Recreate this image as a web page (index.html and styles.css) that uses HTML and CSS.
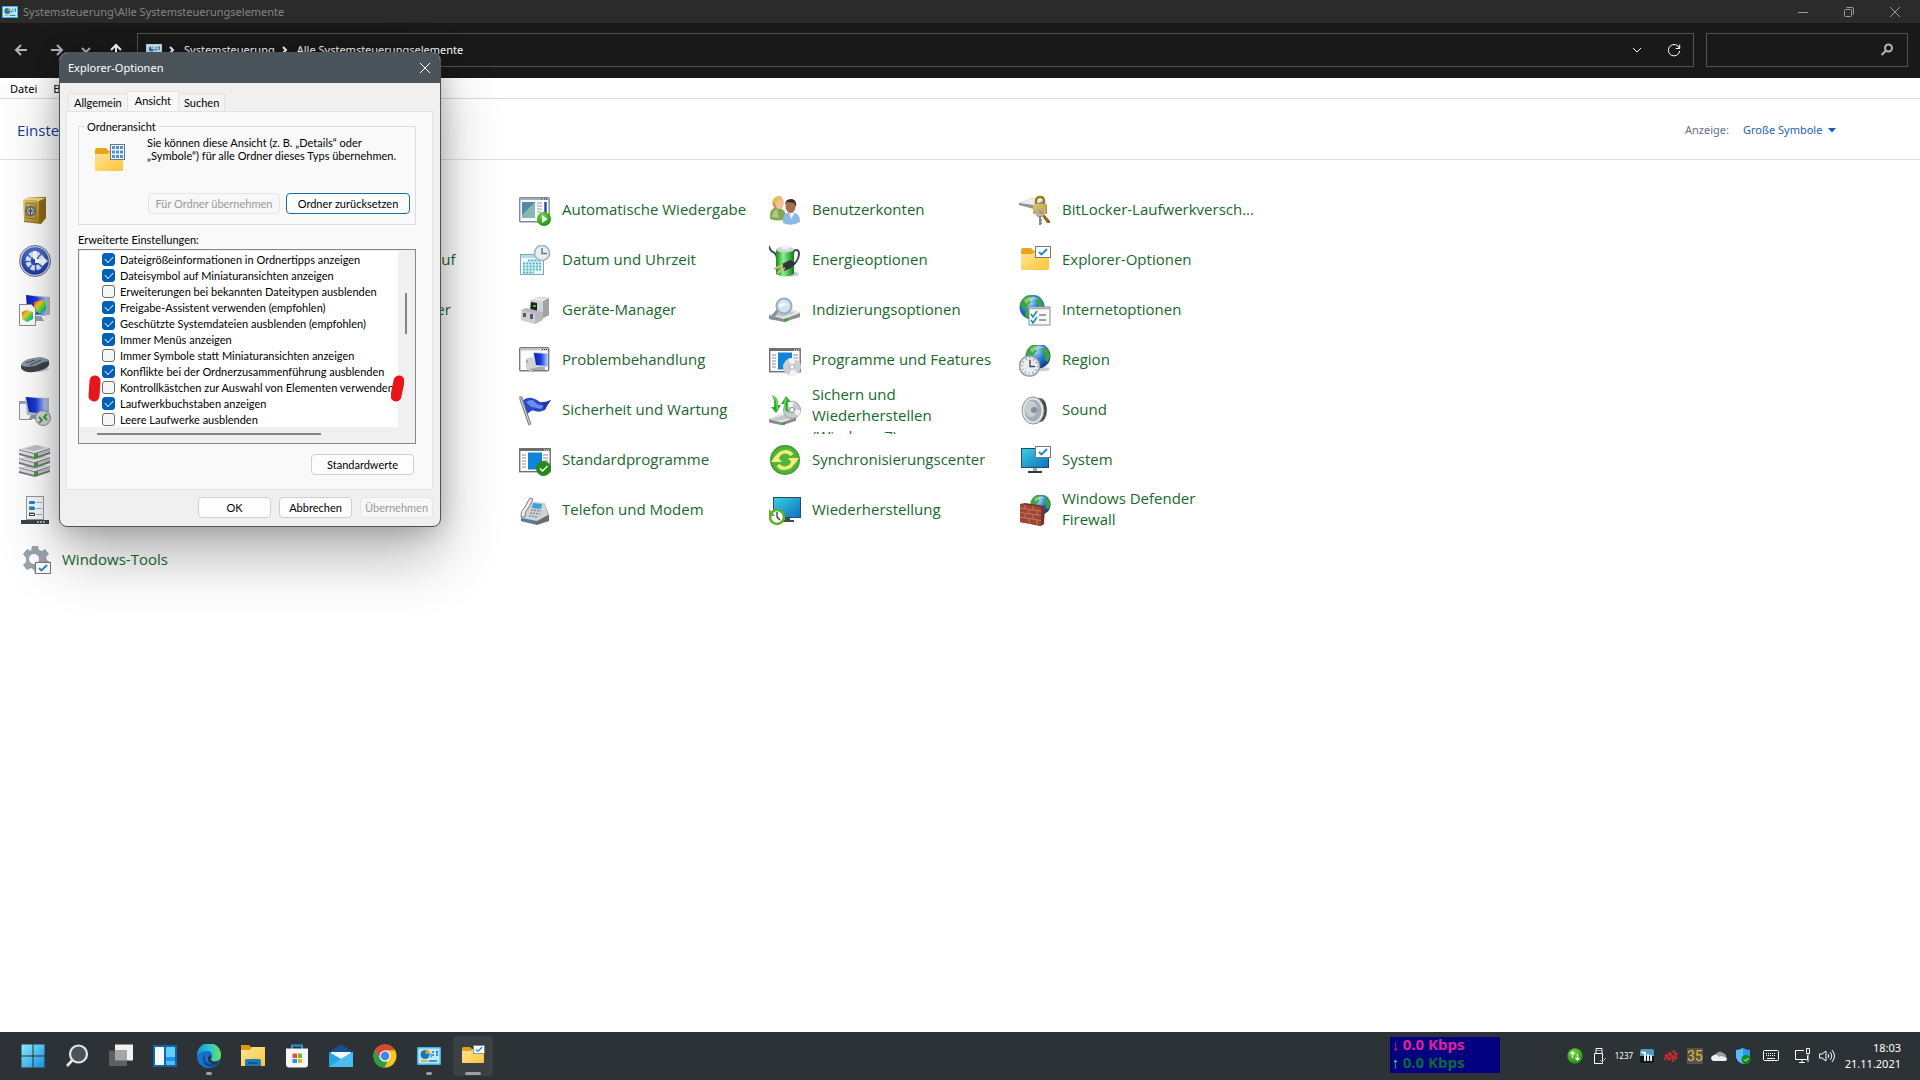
FILE: index.html
```html
<!DOCTYPE html>
<html lang="de">
<head>
  <meta charset="UTF-8" />
  <meta name="viewport" content="width=device-width, initial-scale=1.0"/>
  <title>Systemsteuerung\Alle Systemsteuerungselemente</title>
  <link rel="stylesheet" href="styles.css">
</head>
<body>
  <!-- shared gradients and symbols -->
  <svg class="defs" width="0" height="0" aria-hidden="true">
    <defs>
      <linearGradient id="folder" x1="0" y1="0" x2="1" y2="1"><stop offset="0" stop-color="#ffe59a"/><stop offset="1" stop-color="#fcc535"/></linearGradient>
      <linearGradient id="screen" x1="0" y1="0" x2="1" y2="1"><stop offset="0" stop-color="#35d0e0"/><stop offset="1" stop-color="#1170c0"/></linearGradient>
      <linearGradient id="navy" x1="0" y1="0" x2="1" y2="0"><stop offset="0" stop-color="#0a1cae"/><stop offset=".5" stop-color="#1c3fe0"/><stop offset="1" stop-color="#b9d4ff"/></linearGradient>
      <linearGradient id="gold" x1="0" y1="0" x2="1" y2="1"><stop offset="0" stop-color="#e6cd7a"/><stop offset="1" stop-color="#a9821f"/></linearGradient>
      <linearGradient id="battery" x1="0" y1="0" x2="1" y2="0"><stop offset="0" stop-color="#128a22"/><stop offset=".4" stop-color="#8ef08a"/><stop offset="1" stop-color="#0d7c1d"/></linearGradient>
      <linearGradient id="win" x1="0" y1="0" x2="1" y2="1"><stop offset="0" stop-color="#8ceafd"/><stop offset="1" stop-color="#1290e0"/></linearGradient>
      <linearGradient id="rainbow" x1="0" y1="0" x2="1" y2="1"><stop offset="0" stop-color="#f22"/><stop offset=".35" stop-color="#fc2"/><stop offset=".65" stop-color="#3d5"/><stop offset="1" stop-color="#26f"/></linearGradient>
      <linearGradient id="edge" x1="0" y1="0" x2="1" y2="0"><stop offset="0" stop-color="#1a8fd8"/><stop offset=".5" stop-color="#2bc4d4"/><stop offset="1" stop-color="#6ce05a"/></linearGradient>
      <radialGradient id="ball" cx=".4" cy=".3" r=".75"><stop offset="0" stop-color="#a8e4ff"/><stop offset=".45" stop-color="#2c82dc"/><stop offset="1" stop-color="#0a2f80"/></radialGradient>
      <radialGradient id="blue" cx=".5" cy=".3" r=".8"><stop offset="0" stop-color="#5f86e0"/><stop offset="1" stop-color="#142f96"/></radialGradient>
      <radialGradient id="green" cx=".4" cy=".3" r=".8"><stop offset="0" stop-color="#6fdc3c"/><stop offset="1" stop-color="#138410"/></radialGradient>
    </defs>
    <symbol id="globe" viewBox="0 0 26 26">
      <circle cx="13" cy="13" r="12.5" fill="url(#ball)"/>
      <path d="M3 6 8 2l6-1-1 3-3 1 2 3-4 4-1 4-3-2-3-3zM18 3l5 4 2 6-2 6-3-2v-5l-3-3 1-3zM7 15l5 2 1 4-3 4-4-3z" fill="#3fa535"/>
      <path d="M5 6Q12 0 20 5 12 5 7 10z" fill="#fff" opacity=".4"/>
    </symbol>
    <symbol id="cpl" viewBox="0 0 24 18">
      <rect width="24" height="18" rx="1" fill="#3fb4e6"/>
      <rect x="1.5" y="1.5" width="21" height="15" fill="#bfeafb"/>
      <circle cx="8" cy="7.5" r="4.5" fill="#1776b8"/>
      <path d="M8.500 7V2.500A4.500 4.500 0 0 1 13 7z" fill="#e79a2b"/>
      <path d="M15 5h2m2 0h2m-6 3h2m2 0h2" stroke="#1776b8" stroke-width="1.500"/>
      <path d="M14 6.500v4m6-7v4" stroke="#1776b8"/>
      <path d="M4 14h7" stroke="#e79a2b" stroke-width="1.500"/><path d="M12 14h8" stroke="#1776b8" stroke-width="1.500"/>
    </symbol>
    <symbol id="checkcard" viewBox="0 0 16 12">
      <rect x=".5" y=".5" width="15" height="11" fill="#fff" stroke="#777"/>
      <path d="M4 6l2.500 2.500L12 3" fill="none" stroke="#1787d4" stroke-width="1.800"/>
    </symbol>
    <symbol id="drive" viewBox="0 0 32 16">
      <path d="M0 8 18 1l13 5v4L15 15 0 12z" fill="#8b8d92"/>
      <path d="M0 8 18 1l13 5-16 6z" fill="#e9eaec"/>
      <path d="M3 8 18 3l8 3-12 4z" fill="#c4c6ca"/>
      <path d="M15 12l4-1v3l-4 1z" fill="#3aa02c"/>
    </symbol>
    <symbol id="disk" viewBox="0 0 32 16">
      <path d="M0 5 15 9 31 4v6L16 15 0 11z" fill="#77797e"/>
      <path d="M0 6 15 10v3L0 9z" fill="#dcdde0"/>
      <path d="M16 10 31 5v3l-15 5z" fill="#c2c4c8"/>
      <path d="M0 5 17 0l14 4-15 5z" fill="#e6e7e9"/>
      <path d="M4 5 17 1l9 3-11 3z" fill="#bfc1c5"/>
      <path d="M15 10l4-1v4l-4 1z" fill="#3aa02c"/>
    </symbol>
  </svg>

  <header class="titlebar">
    <svg class="app-icon" viewBox="0 0 24 18"><use href="#cpl"/></svg>
    <span class="window-title">Systemsteuerung\Alle Systemsteuerungselemente</span>
    <div class="window-buttons">
      <button type="button" aria-label="Minimieren"><svg viewBox="0 0 12 12"><path d="M1 6.500h10"/></svg></button>
      <button type="button" aria-label="Verkleinern"><svg viewBox="0 0 12 12"><rect x="1.500" y="3.500" width="7" height="7" rx="1"/><path d="M3.500 1.500H9q1.500 0 1.500 1.500v5.500"/></svg></button>
      <button type="button" aria-label="Schließen"><svg viewBox="0 0 12 12"><path d="M1 1l10 10M11 1 1 11"/></svg></button>
    </div>
  </header>

  <div class="navbar">
    <div class="nav-buttons">
      <button type="button" aria-label="Zurück"><svg viewBox="0 0 14 14"><path d="M13 7H2m5-5L2 7l5 5"/></svg></button>
      <button type="button" aria-label="Vorwärts"><svg viewBox="0 0 14 14"><path d="M1 7h11M7 2l5 5-5 5"/></svg></button>
      <button type="button" class="small" aria-label="Zuletzt besucht"><svg viewBox="0 0 14 14"><path d="M3 5l4 4 4-4"/></svg></button>
      <button type="button" class="bright" aria-label="Nach oben"><svg viewBox="0 0 14 14"><path d="M7 13V2M2 7l5-5 5 5"/></svg></button>
    </div>
    <nav class="address">
      <svg class="app-icon" viewBox="0 0 24 18"><use href="#cpl"/></svg>
      <svg class="sep" viewBox="0 0 6 8"><path d="M1 1l3 3-3 3"/></svg>
      <a href="#">Systemsteuerung</a>
      <svg class="sep" viewBox="0 0 6 8"><path d="M1 1l3 3-3 3"/></svg>
      <a href="#">Alle Systemsteuerungselemente</a>
      <button type="button" class="history" aria-label="Vorherige Orte"><svg viewBox="0 0 14 14"><path d="M3 5l4 4 4-4"/></svg></button>
      <button type="button" aria-label="Aktualisieren"><svg viewBox="0 0 14 14"><path d="M12.500 5.500A5.700 5.700 0 1 0 12.700 8M12.700 1.500v4h-4"/></svg></button>
    </nav>
    <div class="search">
      <input type="text" aria-label="Suchen">
      <svg viewBox="0 0 14 14"><circle cx="8.500" cy="5" r="3.500"/><path d="M6 7.500 1.500 12"/></svg>
    </div>
  </div>

  <div class="menubar">
    <button type="button">Datei</button>
    <button type="button">Bearbeiten</button>
    <button type="button">Ansicht</button>
    <button type="button">Extras</button>
  </div>

  <div class="heading">
    <h1>Einstellungen des Computers anpassen</h1>
    <label for="view">Anzeige:</label>
    <div class="view-select">
      <select id="view"><option>Große Symbole</option></select>
      <svg viewBox="0 0 8 5"><path d="M0 0h8L4 4.500z"/></svg>
    </div>
  </div>

  <main class="items">
    <a class="item" href="#" aria-label="Anmeldeinformationsverwaltung">
      <svg viewBox="0 0 32 32"><path d="M5 5l6-3h16v21l-5 6-17-2z" fill="#8a6a18"/><path d="M4 5l16 1v22L5 26z" fill="url(#gold)"/><path d="M4 5l6-3 17 1-7 3z" fill="#efd98e"/><path d="M7 8l10 1v15L7 23z" fill="none" stroke="#8d7226"/><circle cx="11.500" cy="16" r="5.500" fill="#6f7073"/><circle cx="11.500" cy="16" r="3.500" fill="#d7d8da"/><path d="M11.500 11v10m-5-5h10m-8.500-3.500 7 7m0-7-7 7" stroke="#4d4e51"/></svg>
    </a>
    <a class="item" href="#" aria-label="Arbeitsordner">
      <svg viewBox="0 0 32 32"><path d="M2 7h10l3 3h14v17H2z" fill="url(#folder)"/><circle cx="23" cy="22" r="7" fill="url(#green)"/></svg>
    </a>
    <a class="item" href="#">
      <svg viewBox="0 0 32 32"><rect x=".7" y="2.700" width="29.500" height="24" rx="1" fill="#fafbfc" stroke="#858a90" stroke-width="1.400"/><path d="M1 4h29" stroke="#a8adb3" stroke-width="2"/><path d="M22 4h1m2 0h1m1 0h1" stroke="#333"/><rect x="3" y="7" width="13" height="16" fill="#87b8ae"/><path d="M3 7h13L3 20z" fill="#3d74a8" opacity=".7"/><path d="M18 8h5m-5 3h5m-5 3h5m-5 3h4" stroke="#999"/><path d="M26.500 7v12" stroke="#2b4f9a" stroke-width="2.500"/><circle cx="25" cy="24" r="7" fill="url(#green)"/><path d="M23 20l5.500 4-5.500 4z" fill="#fff"/></svg>
      <span>Automatische Wiedergabe</span>
    </a>
    <a class="item" href="#">
      <svg viewBox="0 0 32 32"><path d="M1 24q-1-11 7-12 9 1 9 12-8 3-16 0z" fill="#7fa957"/><path d="M3 22q1-7 5-8l2 9" fill="#a9cc80"/><ellipse cx="9" cy="8" rx="5.500" ry="6.500" fill="#c59a31"/><ellipse cx="10.500" cy="9" rx="4" ry="5" fill="#f1c39a"/><path d="M4 7q1-7 8-6l2 4q-6-1-7 5z" fill="#e3c055"/><path d="M14 27q-1-10 8-10t9 10q-9 5-17 1z" fill="#8db7e4"/><path d="M20 18l2 6 4-6z" fill="#e6f0fb"/><ellipse cx="21.500" cy="11.500" rx="5" ry="6.500" fill="#a87046"/><path d="M16 10q0-6 6-6t5 8l-2-4-7-1z" fill="#3c2c25"/></svg>
      <span>Benutzerkonten</span>
    </a>
    <a class="item" href="#">
      <svg viewBox="0 0 32 32"><path d="M0 8l14-5 10 3v4l-9 4-15-4z" fill="#8e9095"/><path d="M0 8l14-5 10 3-10 4z" fill="#eceded"/><path d="M17 9V6q0-4 4-4t4 4v4" fill="none" stroke="#9c7a25" stroke-width="2.400"/><rect x="14" y="9" width="14" height="10" rx="1" fill="url(#gold)"/><circle cx="22" cy="16" r="4" fill="none" stroke="#d9b94e" stroke-width="2"/><path d="M24 18l7 8v2h-3l-5-7z" fill="#8e6a17"/><circle cx="21" cy="18" r="3.500" fill="none" stroke="#a9abb0" stroke-width="2"/><path d="M21 21v9m0-2h2m-2-3h2" stroke="#888a90" stroke-width="2"/></svg>
      <span class="nowrap">BitLocker-Laufwerkversch...</span>
    </a>

    <a class="item" href="#" aria-label="Center für erleichterte Bedienung">
      <svg viewBox="0 0 32 32"><circle cx="16" cy="16" r="15.500" fill="#d4d8e2" stroke="#6c7487"/><circle cx="16" cy="16" r="13.700" fill="url(#blue)"/><circle cx="16" cy="16" r="7" fill="none" stroke="#dce6fb" stroke-width="5" stroke-dasharray="4 1.500"/><circle cx="16" cy="16" r="4" fill="#2b4db4"/><path d="M14 6h4v8h-4zM16 14h7v-3l6 5-6 5v-3h-7z" fill="#fff"/></svg>
    </a>
    <a class="item" href="#">
      <svg viewBox="0 0 32 32"><path d="M2 7h10l3 3h14v17H2z" fill="url(#folder)"/><circle cx="23" cy="22" r="7" fill="#54b52c"/></svg>
      <span>Dateiversionsverlauf</span>
    </a>
    <a class="item" href="#">
      <svg viewBox="0 0 32 32"><rect x="1.500" y="9.500" width="23" height="20" fill="#eef8fb" stroke="#7fa9b8"/><path d="M2 10h22v3H2z" fill="#b9dbe6"/><path d="M9 15.500h13M4 18.500h18M4 21.500h18M4 24.500h18M4 27.500h11" stroke="#4fb4cc" stroke-width="2.200" stroke-dasharray="2.200 1"/><circle cx="23" cy="8" r="7.500" fill="#e8eff4" stroke="#a3b1bb" stroke-width="1.600"/><path d="M23 3v5.500h5" fill="none" stroke="#66788a" stroke-width="1.500"/></svg>
      <span>Datum und Uhrzeit</span>
    </a>
    <a class="item" href="#">
      <svg viewBox="0 0 32 32"><ellipse cx="22" cy="29" rx="8" ry="2.500" fill="#ccc"/><path d="M0 1q1 5 4 6t4 6M24 11q0-6 3-6t3 4-3 8-6 4" fill="none" stroke="#404858" stroke-width="2"/><path d="M7 4h18v25q-9 5-18 0z" fill="url(#battery)"/><ellipse cx="16" cy="4.500" rx="9" ry="3" fill="#cfd4d9"/><ellipse cx="16" cy="2.500" rx="4" ry="2" fill="#eef0f2"/><path d="M13 19l8-4 6 3-5 5-7 3z" fill="#30343c"/><path d="M14 20l-9 4m11-1-8 5" stroke="#d4ba73" stroke-width="2"/></svg>
      <span>Energieoptionen</span>
    </a>
    <a class="item" href="#">
      <svg viewBox="0 0 32 32"><path d="M2 5q0-2 2-2h8l3 3h15v10H2z" fill="#eaa61b"/><path d="M2 9h11l3-2h14v16q0 2-2 2H4q-2 0-2-2z" fill="url(#folder)"/><use href="#checkcard" x="16" y="1" width="16" height="12"/></svg>
      <span>Explorer-Optionen</span>
    </a>

    <a class="item" href="#" aria-label="Farbverwaltung">
      <svg viewBox="0 0 32 32"><path d="M7 0l24 2v18L7 20z" fill="#b3b8c3"/><path d="M7 0l21 3-1 18L9 18z" fill="url(#navy)"/><path d="M16 21h6l3 5h-9z" fill="#9da1a9"/><path d="M18 6l7-1 2 2v8l-6 4-6-4V7z" fill="url(#rainbow)"/><path d="M.5 9.500h12l4 4v17H.500z" fill="#fdfdfd" stroke="#8c8c8c"/><path d="M3 17l5-2 6 2v7l-6 3-5-3z" fill="url(#rainbow)"/></svg>
    </a>
    <a class="item" href="#">
      <svg viewBox="0 0 32 32"><path d="M3 12h26v12H3z" fill="#777"/><path d="M8 5h16v9H8z" fill="#ddd"/></svg>
      <span>Geräte und Drucker</span>
    </a>
    <a class="item" href="#">
      <svg viewBox="0 0 32 32"><path d="M12 6l8-4 10 1v17l-6 3-12-3z" fill="#8e8f93"/><path d="M11 5l9-3 10 1-7 4z" fill="#e4e5e8"/><path d="M24 7l6-4v17l-6 3z" fill="#a2a3a8"/><path d="M11 5l13 2v15l-13-2z" fill="#d3d4d7"/><path d="M12 7l6 1v10h-7z" fill="#1d211d"/><path d="M14 10h3v2h-3z" fill="#2fc331"/><path d="M2 15l5-2 17 4v8l-8 4-14-4z" fill="#b7b8bd"/><path d="M2 15l14 4v10L2 25z" fill="#cecfd3"/><path d="M4 18h3v4H4zm7 1h3v5h-3z" fill="#555a62"/></svg>
      <span>Geräte-Manager</span>
    </a>
    <a class="item" href="#">
      <svg viewBox="0 0 32 32"><use href="#drive" x="0" y="12" width="32" height="16"/><path d="M9 15l-7 9" stroke="#8a8f98" stroke-width="3"/><circle cx="15" cy="11" r="7.500" fill="#cfe5f7" stroke="#a2abb5" stroke-width="2"/><path d="M10 10q5-5 9 0-4 0-9 3z" fill="#fff" opacity=".8"/></svg>
      <span>Indizierungsoptionen</span>
    </a>
    <a class="item" href="#">
      <svg viewBox="0 0 32 32"><use href="#globe" x="0" y="-1" width="26" height="26"/><rect x="10" y="12" width="21" height="18" fill="#fbfbfb" stroke="#888b90"/><path d="M11 13.500h19" stroke="#aab" stroke-width="1.500"/><path d="M12 19l2 3 4-6m-6 9l2 3 4-6" fill="none" stroke="#1b8fbd" stroke-width="1.600"/><path d="M20 20h7m-7 5h7" stroke="#444"/></svg>
      <span>Internetoptionen</span>
    </a>

    <a class="item" href="#" aria-label="Maus">
      <svg viewBox="0 0 32 32"><ellipse cx="18" cy="24" rx="12" ry="3" fill="#d5d5d5"/><path d="M2 20q2-5 13-7t15 3v4q-2 5-15 7-11 1-13-4z" fill="#3d444c"/><path d="M2 20q2-5 13-7t15 3q-7 1-14 5-11 2-14-1z" fill="#8b97a3"/><path d="M7 18l9-3m-5 5l11-5" stroke="#48525c" stroke-width="1.200"/></svg>
    </a>
    <a class="item" href="#" aria-label="Netzwerk- und Freigabecenter">
      <svg viewBox="0 0 32 32"><path d="M4 6h20v14H4z" fill="url(#screen)"/></svg>
    </a>
    <a class="item" href="#">
      <svg viewBox="0 0 32 32"><rect x=".7" y="2.700" width="29" height="23" rx="1" fill="#fff" stroke="#777b80" stroke-width="1.400"/><path d="M1 4.500h28" stroke="#c2c5c9" stroke-width="2"/><path d="M23 4.500h1m1 0h1m1 0h1" stroke="#222"/><path d="M7 14l4-2 4 1v12l-4 1-4-2z" fill="#d2d3d6"/><path d="M8 15v3" stroke="#3c3" /><path d="M14 7l15 1v14l-15 1z" fill="#cdd2dc"/><path d="M15 8l14 1v12l-12-1z" fill="url(#navy)"/><path d="M11 24l8-2h7v3H11z" fill="#a8abb0"/></svg>
      <span>Problembehandlung</span>
    </a>
    <a class="item" href="#">
      <svg viewBox="0 0 32 32"><rect x=".7" y="3.700" width="30.500" height="23" fill="#fff" stroke="#6f6f6f" stroke-width="1.400"/><path d="M1 5h30" stroke="#6f6f6f" stroke-width="2"/><path d="M25 5h1m1 0h1m1 0h1" stroke="#fff"/><path d="M3 10h4m-4 3h4m-4 3h4m-4 3h4m-4 3h4m17-12h5m-5 3h5" stroke="#888"/><path d="M9 7.500h14v17H9z" fill="#1083dc"/><circle cx="23" cy="22" r="9" fill="#cdcfd2"/><path d="M23 22l-4-8q4-2 8 0zm0 0l6 7q-5 4-9 1z" fill="#f3f3f3"/><circle cx="23" cy="22" r="2.500" fill="#fff" stroke="#aaa"/></svg>
      <span class="nowrap">Programme und Features</span>
    </a>
    <a class="item" href="#">
      <svg viewBox="0 0 32 32"><ellipse cx="21" cy="24" rx="10" ry="2" fill="#ccc"/><use href="#globe" x="6" y="-2" width="26" height="26"/><circle cx="10.500" cy="21" r="10" fill="#e9edf1" stroke="#98a0a8" stroke-width="1.600"/><circle cx="10.500" cy="21" r="7.500" fill="none" stroke="#7d868f" stroke-width="1.500" stroke-dasharray="1 2.900"/><path d="M11 15v6.500h5" fill="none" stroke="#444c55" stroke-width="1.400"/></svg>
      <span>Region</span>
    </a>

    <a class="item" href="#" aria-label="RemoteApp- und Desktopverbindungen">
      <svg viewBox="0 0 32 32"><path d="M.5 6.500h12v18H.500z" fill="#f6f8fb" stroke="#8994a4"/><path d="M1 8h11" stroke="#9aa9c4" stroke-width="2"/><path d="M6 2l24 1v18L8 20z" fill="#b3b8c3"/><path d="M7 2l20 2-1 15-16-2z" fill="url(#navy)"/><path d="M12 20h6l1 4h-9z" fill="#8f949d"/><circle cx="24" cy="23" r="7.500" fill="#d5d8da" stroke="#888d92"/><path d="M20 22l3 3-3 3m8-9l-3 3 3 3" fill="none" stroke="#2f9e28" stroke-width="1.800"/></svg>
    </a>
    <a class="item" href="#" aria-label="Schriftarten">
      <svg viewBox="0 0 32 32"><path d="M2 7h10l3 3h14v17H2z" fill="url(#folder)"/></svg>
    </a>
    <a class="item" href="#">
      <svg viewBox="0 0 32 32"><path d="M4 5q5-3 9-2t8 4q4 1 11-2-4 5-6 10-6 3-10 1t-8 4z" fill="#2a46c8"/><path d="M7 7q6-4 9 0t9 3l-3 4q-7-2-10-2z" fill="#6d8cec"/><path d="M22 7q4 1 10-2-4 5-6 9z" fill="#2038a8"/><path d="M2 4l9 26" stroke="#777b82" stroke-width="3.200"/><path d="M2 4l9 26" stroke="#e6e7ea"/><circle cx="2" cy="3" r="2" fill="#9ea1a7"/></svg>
      <span>Sicherheit und Wartung</span>
    </a>
    <a class="item" href="#">
      <svg viewBox="0 0 32 32"><use href="#drive" x="0" y="16" width="28" height="16"/><circle cx="23" cy="15" r="8.500" fill="#c9cbd0" stroke="#9a9ca1"/><path d="M23 15l-5-7q3-2 7-1zm0 0l6 6q3-3 2-6z" fill="#f5f5f6"/><circle cx="23" cy="15" r="2.500" fill="#fff" stroke="#888"/><path d="M3 0q7 3 6 10h3l-5 8-5-6h3Q6 5 3 0z" fill="#2cae28"/><path d="M20 18q-6-3-5-9h-3l5-8 5 6h-3q-1 6 1 11z" fill="#2cae28"/><path d="M5 2q4 4 3 12m8 0q-1-6 1-11" fill="none" stroke="#9bec88"/></svg>
      <span>Sichern und Wiederherstellen (Windows 7)</span>
    </a>
    <a class="item" href="#">
      <svg viewBox="0 0 32 32"><ellipse cx="21" cy="15" rx="7" ry="12" fill="#5d6064"/><path d="M18 3l8 4q3 8-1 17l-8 5z" fill="#44474b"/><ellipse cx="14" cy="15.500" rx="11" ry="13.500" fill="#e4e6e8" stroke="#8b8e92"/><ellipse cx="14" cy="15.500" rx="8.500" ry="11" fill="#a5aeb5"/><ellipse cx="12" cy="14" rx="6" ry="8" fill="#c6ced4"/><circle cx="15" cy="15" r="3" fill="#828d96"/></svg>
      <span>Sound</span>
    </a>

    <a class="item" href="#" aria-label="Speicherplätze">
      <svg viewBox="0 0 32 32"><use href="#disk" x="0" y="17" width="32" height="16"/><use href="#disk" x="0" y="8" width="32" height="16"/><use href="#disk" x="0" y="-1" width="32" height="16"/></svg>
    </a>
    <a class="item" href="#" aria-label="Spracherkennung">
      <svg viewBox="0 0 32 32"><rect x="12" y="4" width="8" height="16" rx="4" fill="#999"/></svg>
    </a>
    <a class="item" href="#">
      <svg viewBox="0 0 32 32"><rect x=".7" y="3.700" width="30.500" height="23" fill="#fff" stroke="#6f6f6f" stroke-width="1.400"/><path d="M1 5h30" stroke="#6f6f6f" stroke-width="2"/><path d="M25 5h1m1 0h1m1 0h1" stroke="#fff"/><path d="M3 10h4m-4 3h4m-4 3h4m-4 3h4m-4 3h4m17-12h5m-5 3h5m-5 3h5" stroke="#888"/><path d="M9 7.500h14v17H9z" fill="#1083dc"/><circle cx="24.500" cy="23.500" r="7.500" fill="#258a17"/><path d="M21 23.500l2.500 2.500 5-5" fill="none" stroke="#fff" stroke-width="1.400"/></svg>
      <span>Standardprogramme</span>
    </a>
    <a class="item" href="#">
      <svg viewBox="0 0 32 32"><circle cx="16" cy="15" r="15" fill="#3a9a30"/><circle cx="16" cy="15" r="13.500" fill="#52b53a"/><path d="M8 14a8.500 8.500 0 0 1 15-4M24 16a8.500 8.500 0 0 1-15 4" fill="none" stroke="#f3ee79" stroke-width="3.600"/><path d="M19 13h11l-5 7zM13 17H2l5-7z" fill="#f3ee79"/></svg>
      <span>Synchronisierungscenter</span>
    </a>
    <a class="item" href="#">
      <svg viewBox="0 0 32 32"><rect x="2" y="3" width="28" height="20" fill="#2b4a5c"/><rect x="3" y="4" width="26" height="18" fill="url(#screen)"/><path d="M14 23h4v4h-4z" fill="#9aa"/><path d="M9 26h14v2H9z" fill="#333b42"/><use href="#checkcard" x="16" y="1" width="16" height="12"/></svg>
      <span>System</span>
    </a>

    <a class="item" href="#" aria-label="Taskleiste und Navigation">
      <svg viewBox="0 0 32 32"><rect x="7.500" y="1.500" width="17" height="23" fill="#f7fafb" stroke="#8f9ba3"/><path d="M17 7.500h6m-6 6h6m-13-2h5m-5 6h5m2 2h6" stroke="#9fb3bf"/><rect x="10" y="6" width="6" height="3" rx="1" fill="#1686cc"/><rect x="10" y="12" width="6" height="3" rx="1" fill="#1686cc"/><rect x="10.500" y="18.500" width="5" height="2" fill="#fff" stroke="#444"/><path d="M2 25h28v4H2z" fill="#3b434b"/><path d="M18 27h2m1 0h2m1 0h2" stroke="#c8ced3" stroke-width="1.500"/></svg>
    </a>
    <a class="item" href="#" aria-label="Tastatur">
      <svg viewBox="0 0 32 32"><rect x="2" y="11" width="24" height="12" fill="#777"/></svg>
    </a>
    <a class="item" href="#">
      <svg viewBox="0 0 32 32"><path d="M2 19l7-12 17 2 4 12v5l-12 4L2 26z" fill="#6b6f75"/><path d="M2 18L9 6l17 2 3 12-11 6-16-3z" fill="#d0d2d5"/><path d="M14 8l9 1-1 5-9-1z" fill="#3aa0dc"/><path d="M12 15l10 1m-11 2l10 1m-11 2l9 1" stroke="#8b9097" stroke-width="1.500" stroke-dasharray="2 1"/><path d="M2 22Q1 16 6 12l5-9 3 1-4 8q-5 5-4 10z" fill="#eceef0" stroke="#7a7f86"/><path d="M4 25l12 2.500" stroke="#2f91c4" stroke-width="2.500" stroke-dasharray="2 1"/></svg>
      <span>Telefon und Modem</span>
    </a>
    <a class="item" href="#">
      <svg viewBox="0 0 32 32"><rect x="4" y="2" width="28" height="21" fill="#2b4a5c"/><rect x="5" y="3" width="26" height="19" fill="url(#screen)"/><path d="M16 23h5v2h-5zM13 25h12v2H13z" fill="#434b52"/><circle cx="8" cy="22" r="7" fill="#fff" stroke="#5faf2a" stroke-width="2.600"/><path d="M0 14v7h6z" fill="#5faf2a"/><path d="M8 17v5l3 3" fill="none" stroke="#222" stroke-width="1.200"/></svg>
      <span>Wiederherstellung</span>
    </a>
    <a class="item" href="#">
      <svg viewBox="0 0 32 32"><use href="#globe" x="11" y="-1" width="21" height="21"/><path d="M1 9l5-1 20 3-1 18-3 2L1 27z" fill="#743428"/><path d="M1 9l21 3v19L1 27z" fill="#a0452f"/><path d="M1 13l21 3M1 17.500l21 3M1 22l21 3.500M6 10v4m8-3v4m-4 0v4m8-3v4M6 19v4m8-3v4m-4 0v5m8-4v5" stroke="#c98474" stroke-width=".8"/></svg>
      <span>Windows Defender Firewall</span>
    </a>

    <a class="item" href="#">
      <svg viewBox="0 0 32 32"><path d="M13 1h6l1 4 3 1 3-2 4 5-3 3 1 3 3 2-1 5-4 0-3 3-1 4h-6l-1-4-3-2-4 2-4-5 3-3v-4L4 9l4-5 4 2z" fill="#99a3ac"/><circle cx="15" cy="14" r="5" fill="#fff"/><use href="#checkcard" x="16" y="17" width="16" height="12"/></svg>
      <span>Windows-Tools</span>
    </a>
  </main>

  <!-- dialog window -->
  <section class="dialog" role="dialog" aria-label="Explorer-Optionen">
    <div class="dialog-title">
      <span>Explorer-Optionen</span>
      <button type="button" aria-label="Schließen"><svg viewBox="0 0 12 12"><path d="M1 1l10 10M11 1 1 11"/></svg></button>
    </div>
    <div class="dialog-body">
      <div class="tabs" role="tablist">
        <button type="button" role="tab">Allgemein</button>
        <button type="button" role="tab" class="active" aria-selected="true">Ansicht</button>
        <button type="button" role="tab">Suchen</button>
      </div>
      <div class="panel">
        <fieldset class="folder-view">
          <legend>Ordneransicht</legend>
          <svg viewBox="0 0 32 32"><path d="M1 7l2-1h9l3 3h14v18H1z" fill="#eaa61b"/><path d="M1 12h12l3-2h13v18q0 1-1 1H2q-1 0-1-1z" fill="url(#folder)"/><rect x="16.500" y="2.500" width="14" height="15" fill="#eef6fc" stroke="#6f7780"/><path d="M18 5.500h11M18 10h11M18 14.500h11" stroke="#4a93d0" stroke-width="3" stroke-dasharray="3 1"/></svg>
          <div class="folder-text">
            <p>Sie können diese Ansicht (z. B. „Details“ oder<br>„Symbole“) für alle Ordner dieses Typs übernehmen.</p>
            <div class="folder-buttons">
              <button type="button" class="btn apply" disabled>Für Ordner übernehmen</button>
              <button type="button" class="btn default">Ordner zurücksetzen</button>
            </div>
          </div>
        </fieldset>

        <p class="list-label">Erweiterte Einstellungen:</p>
        <div class="list">
          <ul>
            <li><label><input type="checkbox" checked>Dateigrößeinformationen in Ordnertipps anzeigen</label></li>
            <li><label><input type="checkbox" checked>Dateisymbol auf Miniaturansichten anzeigen</label></li>
            <li><label><input type="checkbox">Erweiterungen bei bekannten Dateitypen ausblenden</label></li>
            <li><label><input type="checkbox" checked>Freigabe-Assistent verwenden (empfohlen)</label></li>
            <li><label><input type="checkbox" checked>Geschützte Systemdateien ausblenden (empfohlen)</label></li>
            <li><label><input type="checkbox" checked>Immer Menüs anzeigen</label></li>
            <li><label><input type="checkbox">Immer Symbole statt Miniaturansichten anzeigen</label></li>
            <li><label><input type="checkbox" checked>Konflikte bei der Ordnerzusammenführung ausblenden</label></li>
            <li class="marked"><label><input type="checkbox">Kontrollkästchen zur Auswahl von Elementen verwenden</label>
              <svg class="mark left" viewBox="0 0 13 28"><path d="M7 6 6 21"/></svg>
              <svg class="mark right" viewBox="0 0 13 28"><path d="M8 6 5 21"/></svg>
            </li>
            <li><label><input type="checkbox" checked>Laufwerkbuchstaben anzeigen</label></li>
            <li><label><input type="checkbox">Leere Laufwerke ausblenden</label></li>
          </ul>
          <div class="vscroll"><div class="thumb"></div></div>
          <div class="hscroll"><div class="thumb"></div></div>
        </div>
        <div class="panel-footer">
          <button type="button" class="btn defaults">Standardwerte</button>
        </div>
      </div>
      <div class="dialog-footer">
        <button type="button" class="btn">OK</button>
        <button type="button" class="btn">Abbrechen</button>
        <button type="button" class="btn" disabled>Übernehmen</button>
      </div>
    </div>
  </section>

  <footer class="taskbar">
    <div class="apps">
      <button type="button" aria-label="Start"><svg viewBox="0 0 24 24"><path d="M.5.5h11v11H.500zM12.500.5h11v11h-11zM.5 12.500h11v11H.500zM12.500 12.500h11v11h-11z" fill="url(#win)"/></svg></button>
      <button type="button" aria-label="Suche"><svg viewBox="0 0 24 24"><circle cx="13.500" cy="10" r="8.500" fill="#4b5359" stroke="#e6e6e6" stroke-width="2.200"/><path d="M7.500 16 2 22" stroke="#e6e6e6" stroke-width="2.600"/></svg></button>
      <button type="button" aria-label="Taskansicht"><svg viewBox="0 0 24 24"><path d="M6 .5h18v16H6z" fill="#f1f1f1"/><path d="M0 6.500h18V22H0z" fill="#5d5f61"/><path d="M6 6.500h12v10H6z" fill="#a5a5a5"/></svg></button>
      <button type="button" aria-label="Widgets"><svg viewBox="0 0 24 24"><rect y="1" width="24" height="22" fill="#1265ad"/><rect x="2" y="3" width="9" height="18" fill="#f3f8fc"/><rect x="13" y="3" width="9" height="10" fill="#62cdf8"/><rect x="13" y="13" width="9" height="4" fill="#1b93e6"/><rect x="13" y="17" width="9" height="4" fill="#52bdf3"/></svg></button>
      <button type="button" class="running" aria-label="Microsoft Edge"><svg viewBox="0 0 24 24"><circle cx="12" cy="12" r="12" fill="#1b6fc2"/><path d="M0 11A12 12 0 0 1 24 11q0 6-6 6-4 0-4-2 2-2 1-5-2-4-7-3-5 1-8 4z" fill="url(#edge)"/><path d="M0 13q2-6 8-5-3 5 0 10 4 5 12 2-4 5-10 4Q1 22 0 13z" fill="#1574cb"/><path d="M8 10q-2 8 5 10 4 1 8-1-4 5-9 4-6-2-6-8 0-3 2-5z" fill="#0c4a91"/><path d="M14 14q-1 3 3 4 4 0 6-2-1 3-4 4-8 1-8-6 0-2 2-3 1 1 1 3z" fill="#2c3236"/></svg></button>
      <button type="button" aria-label="Explorer"><svg viewBox="0 0 24 24"><path d="M0 1h8l2 2h14v18H0z" fill="#dd9a12"/><path d="M0 6h9l2-3h13v19H0z" fill="url(#folder)"/><path d="M4 22v-5q0-2 2-2h12q2 0 2 2v5z" fill="#1d78bd"/><path d="M7 18h10v2H7z" fill="#0d5896"/></svg></button>
      <button type="button" aria-label="Microsoft Store"><svg viewBox="0 0 24 24"><path d="M7 6V1.500h10V6" fill="none" stroke="#2a9ad6" stroke-width="2"/><path d="M1 4.500h22v16q0 3-3 3H4q-3 0-3-3z" fill="#f6f6f6"/><path d="M7.500 9.500H12V14H7.500z" fill="#e5532d"/><path d="M13 9.500h4V14h-4z" fill="#79b829"/><path d="M7.500 15H12v4H7.500z" fill="#1f9be2"/><path d="M13 15h4v4h-4z" fill="#f2b31a"/></svg></button>
      <button type="button" aria-label="Mail"><svg viewBox="0 0 24 24"><path d="M0 8 12 .5 24 8v3H0z" fill="#14528f"/><path d="M2 8h20v8H2z" fill="#f2f6fa"/><path d="M0 8l12 7 12-7v15H0z" fill="#27a3e8"/><path d="M0 23l12-8L24 8v15z" fill="#48bdf2"/></svg></button>
      <button type="button" aria-label="Chrome"><svg viewBox="0 0 24 24"><circle cx="12" cy="12" r="11.500" fill="#f9c51e"/><path d="M2 6.200A11.500 11.500 0 0 1 22 6.200H12L7 14.800z" fill="#de4436"/><path d="M2 6.200 7 14.800q2 3 5 3h2.500L11.500 23.500A11.500 11.500 0 0 1 2 6.200z" fill="#2a9d4c"/><circle cx="12" cy="12" r="5.600" fill="#fff"/><circle cx="12" cy="12" r="4.400" fill="#4285e8"/></svg></button>
      <button type="button" class="running" aria-label="Systemsteuerung"><svg viewBox="0 0 24 24"><use href="#cpl" x="0" y="3" width="24" height="18"/></svg></button>
      <button type="button" class="running current" aria-label="Explorer-Optionen"><svg viewBox="0 0 24 24"><path d="M1 4l1-1h7l2 2h12v13H1z" fill="#e4a11a"/><path d="M1 7h9l2-2h11v13q0 1-1 1H2q-1 0-1-1z" fill="url(#folder)"/><use href="#checkcard" x="12" y="1" width="12" height="9"/></svg></button>
    </div>

    <div class="speed">
      <div class="down"><i>↓</i>0.0 Kbps</div>
      <div class="up"><i>↑</i>0.0 Kbps</div>
    </div>

    <div class="tray">
      <svg viewBox="0 0 16 16"><circle cx="8" cy="8" r="7.700" fill="url(#green)"/><path d="M5.500 10V4.500M3.500 6l2-2 2 2M10.500 6v5.500M8.500 10l2 2 2-2" fill="none" stroke="#fff" stroke-width="1.300"/></svg>
      <svg viewBox="0 0 16 16" class="line"><path d="M5 5V.5h6V5M3.500 5.500h8v10h-8zM6.500 2.500h1m1 0h1"/><path d="M9 12l2 2 4-4" stroke="#aaa"/></svg>
      <span class="counter">1237</span>
      <svg viewBox="0 0 16 16"><rect x="1" y="1" width="14" height="14" rx="2" fill="#10171d"/><path d="M1 8V3q0-2 2-2h10q2 0 2 2v5z" fill="#4d9cc5"/><path d="M2.500 4.500h3M6 4v9M9 6v7M12 7v6" stroke="#fff" stroke-width="1.800"/></svg>
      <svg viewBox="0 0 16 16"><g fill="#c62b31"><circle cx="3.500" cy="8" r="2"/><circle cx="7" cy="6" r="2"/><circle cx="10" cy="9" r="2"/><circle cx="6" cy="10.500" r="2"/><circle cx="10" cy="12.500" r="1.600"/><circle cx="13" cy="6" r="1.800"/><circle cx="13" cy="10" r="1.700"/><circle cx="11" cy="3.500" r="1.500"/><circle cx="2" cy="11" r="1.200"/></g></svg>
      <span class="temp">35</span>
      <svg viewBox="0 0 16 16"><path d="M3 9q0-3 3-4 3-3 6 0 4 1 3 5z" fill="#9c9c9c"/><path d="M2 13q-2-1-2-3t3-3q3-1 5 2 3-2 5 0 3 0 3 2t-2 2z" fill="#efefef"/></svg>
      <svg viewBox="0 0 16 16"><path d="M8 0q3 2 7 2v6q0 5-7 8-7-3-7-8V2q4 0 7-2z" fill="#2f9be8"/><path d="M8 0v16q-7-3-7-8V2q4 0 7-2z" fill="#5bbcf5"/><circle cx="11" cy="11.500" r="4.500" fill="#138a1e"/><path d="M9 11.500l1.500 1.500 3-3" fill="none" stroke="#fff"/></svg>
      <svg viewBox="0 0 16 12" class="line keyboard"><rect x=".5" y=".5" width="15" height="10" rx="1"/><path d="M3 3.500h10M3 5.500h10" stroke-dasharray="1 1"/><path d="M4 8.500h8"/></svg>
      <svg viewBox="0 0 16 16" class="line"><path d="M9 2.500H.500v9h12V8M4 14.500h6M7 12v2M11.500.5h3v5h-3zM13 6v8"/></svg>
      <svg viewBox="0 0 16 16" class="line"><path d="M.5 6v4H3l4 3V3L3 6zM9 6q1.500 2 0 4M11 4q3.500 4 0 8M13 2q5 6 0 12"/></svg>
      <div class="clock"><span>18:03</span><span>21.11.2021</span></div>
    </div>
  </footer>
</body>
</html>
```
FILE: styles.css
```css
* {
  box-sizing: border-box;
}

body {
  margin: 0;
  min-height: 100vh;
  display: flex;
  flex-direction: column;
  position: relative;
  font-family: "Noto Sans", "Open Sans", sans-serif;
  font-size: 11px;
  line-height: 16px;
  background: #fff;
  color: #000;
}

button {
  font: inherit;
  color: inherit;
  background: none;
  border: none;
  padding: 0;
  margin: 0;
}

svg {
  display: block;
  flex: none;
}

p, ul {
  margin: 0;
  padding: 0;
}

a {
  color: inherit;
  text-decoration: none;
}

.defs {
  position: absolute;
}

.app-icon {
  width: 16px;
  height: 12px;
}

/* explorer window */
.titlebar {
  display: flex;
  align-items: center;
  height: 23px;
  padding-left: 2px;
  background: #2b2b2b;
  color: #858585;
}

.window-title {
  flex: 1;
  padding-left: 5px;
}

.window-buttons {
  display: flex;
}

.window-buttons button {
  width: 46px;
  display: flex;
  justify-content: center;
  padding-right: 4px;
}

.window-buttons svg {
  width: 12px;
  height: 12px;
  fill: none;
  stroke: #9a9a9a;
}

.navbar {
  display: flex;
  gap: 12px;
  height: 55px;
  padding: 10px 12px 11px 10px;
  background: #191919;
  color: #fff;
}

.nav-buttons {
  display: flex;
  align-items: center;
  width: 115px;
  gap: 16px;
  padding-left: 4px;
}

.navbar svg {
  fill: none;
  stroke: #fff;
}

.navbar button svg {
  width: 14px;
  height: 14px;
}

.nav-buttons button svg {
  stroke: #b5b5b5;
  stroke-width: 2;
}

.nav-buttons button + button {
  padding-left: 6px;
}

.nav-buttons .small + .bright {
  padding-left: 0;
}

.nav-buttons .small {
  margin-left: -7px;
}

.nav-buttons .bright svg {
  stroke: #fff;
}

.address {
  flex: 1;
  display: flex;
  align-items: center;
  border: 1px solid #535353;
  padding: 0 12px 0 8px;
}

.address .sep {
  width: 6px;
  height: 8px;
  margin: 0 9px 0 7px;
  stroke-width: 2;
}

.address .history {
  margin-left: auto;
  margin-right: 23px;
}

.search {
  display: flex;
  align-items: center;
  width: 202px;
  border: 1px solid #535353;
  padding-right: 13px;
}

.search input {
  flex: 1;
  min-width: 0;
  background: none;
  border: none;
  outline: none;
  color: #fff;
}

.search svg {
  width: 14px;
  height: 14px;
  stroke: #b5b5b5;
  stroke-width: 2;
}

.menubar {
  display: flex;
  gap: 16px;
  height: 21px;
  padding: 2px 10px 0;
  border-bottom: 1px solid #d9d9d9;
}

.heading {
  display: flex;
  align-items: center;
  height: 61px;
  padding: 2px 84px 0 17px;
  border-bottom: 1px solid #dbe2ea;
}

.heading h1 {
  flex: 1;
  margin: 0;
  font-family: "Open Sans", "Noto Sans", sans-serif;
  font-size: 15px;
  font-weight: 400;
  color: #173f8f;
}

.heading label {
  color: #65708a;
  margin-right: 14px;
}

.view-select {
  display: flex;
  align-items: center;
  gap: 5px;
}

.view-select select {
  appearance: none;
  border: none;
  background: none;
  padding: 0;
  font: inherit;
  color: #1b5fb5;
}

.view-select svg {
  width: 8px;
  height: 5px;
  fill: #1b5fb5;
}

.items {
  flex: 1;
  display: grid;
  grid-template-columns: repeat(5, 250px);
  grid-auto-rows: 50px;
  align-content: start;
  padding: 26px 19px;
}

.item {
  display: flex;
  align-items: center;
  gap: 11px;
  height: 50px;
  padding-right: 14px;
  font-family: "Open Sans", "Noto Sans", sans-serif;
  font-size: 15px;
  line-height: 21px;
  color: #17692c;
}

.item svg {
  width: 32px;
  height: 32px;
}

.item span {
  max-width: 190px;
  max-height: 50px;
  margin-bottom: 4px;
  overflow: hidden;
}

.item .nowrap {
  max-width: none;
  white-space: nowrap;
}

/* folder options dialog */
.dialog {
  position: absolute;
  left: 59px;
  top: 52px;
  width: 382px;
  border: 1px solid #4b545b;
  border-radius: 8px;
  background: #f0f0f0;
  box-shadow: 0 28px 60px rgba(0, 0, 0, 0.3), 0 2px 24px rgba(0, 0, 0, 0.2);
  font-family: Lato, "Liberation Sans", sans-serif;
  font-size: 11px;
  line-height: 13px;
}

.dialog-title {
  display: flex;
  justify-content: space-between;
  align-items: center;
  height: 30px;
  padding: 0 9px 1px 8px;
  border-radius: 7px 7px 0 0;
  background: #4b545b;
  color: #fff;
  font-family: "Noto Sans", "Open Sans", sans-serif;
}

.dialog-title svg {
  width: 12px;
  height: 12px;
  fill: none;
  stroke: #fff;
}

.dialog-body {
  padding: 8px 7px 8px 6px;
}

.tabs {
  display: flex;
  align-items: flex-end;
  padding-left: 2px;
}

.tabs button {
  height: 18px;
  padding: 0 5px;
  border: 1px solid #e3e3e3;
  border-bottom: none;
  background: #f3f3f3;
}

.tabs button + button {
  border-left: none;
}

.tabs .active {
  height: 20px;
  padding: 0 7px 2px;
  background: #f9f9f9;
}

.panel {
  height: 379px;
  padding: 8px 16px 0 11px;
  background: #f9f9f9;
  border: 1px solid #e3e3e3;
}

.folder-view {
  display: flex;
  gap: 21px;
  height: 105px;
  margin: 0;
  padding: 3px 5px 0 15px;
  border: 1px solid #dcdcdc;
}

.folder-view legend {
  margin-left: -9px;
  padding: 0 2px;
}

.folder-view svg {
  width: 32px;
  height: 32px;
  margin-top: 6px;
}

.folder-text p {
  white-space: nowrap;
}

.folder-buttons {
  display: flex;
  gap: 6px;
  margin-top: 31px;
  padding-left: 1px;
}

.btn {
  width: 73px;
  height: 21px;
  border: 1px solid #cfcfcf;
  border-radius: 4px;
  background: #fdfdfd;
}

.btn:disabled {
  border-color: #e5e5e5;
  background: #f7f7f7;
  color: #999;
}

.btn.apply {
  width: 132px;
}

.btn.default {
  width: 124px;
  border-color: #1a6f9c;
}

.btn.defaults {
  width: 103px;
}

.list-label {
  padding: 8px 0 3px;
}

.list {
  display: grid;
  grid-template-columns: 1fr 16px;
  height: 195px;
  padding: 1px;
  border: 1px solid #828790;
  background: #f0f0f0;
}

.list ul {
  list-style: none;
  background: #fff;
}

.list li {
  position: relative;
  height: 16px;
  padding-left: 22px;
}

.list label {
  display: flex;
  align-items: center;
  gap: 5px;
  height: 16px;
  white-space: nowrap;
}

.list input {
  appearance: none;
  position: relative;
  width: 13px;
  height: 13px;
  margin: 0;
  border: 1px solid #6d6d6d;
  border-radius: 3px;
  background: #f6f6f6;
}

.list input:checked {
  border-color: #005fb8;
  background: #005fb8;
}

.list input:checked::after {
  content: "";
  position: absolute;
  left: 2px;
  top: 2px;
  width: 7px;
  height: 4px;
  border: solid #cfe6fa;
  border-width: 0 0 1px 1px;
  transform: rotate(-45deg);
}

.mark {
  position: absolute;
  top: -4px;
  width: 13px;
  height: 28px;
  fill: none;
  stroke: #e8161b;
  stroke-width: 11;
  stroke-linecap: round;
}

.mark.left {
  left: 8px;
}

.mark.right {
  left: 311px;
}

.vscroll {
  padding: 42px 0 0 7px;
}

.vscroll .thumb {
  width: 2px;
  height: 41px;
  background: #858585;
}

.hscroll {
  padding: 6px 0 8px 17px;
}

.hscroll .thumb {
  width: 224px;
  height: 2px;
  background: #858585;
}

.panel-footer {
  display: flex;
  justify-content: flex-end;
  padding: 10px 2px 0 0;
}

.dialog-footer {
  display: flex;
  justify-content: flex-end;
  gap: 8px;
  padding-top: 7px;
}

/* taskbar */
.taskbar {
  display: flex;
  align-items: center;
  height: 48px;
  padding: 0 19px 0 13px;
  background: #2c3236;
  color: #fff;
}

.apps {
  display: flex;
  gap: 4px;
  margin-right: auto;
}

.apps button {
  display: flex;
  align-items: center;
  justify-content: center;
  position: relative;
  width: 40px;
  height: 40px;
  border-radius: 4px;
}

.apps svg {
  width: 24px;
  height: 24px;
}

.apps .current {
  background: #3a4044;
}

.apps .running::after {
  content: "";
  position: absolute;
  bottom: 1px;
  width: 6px;
  height: 3px;
  border-radius: 2px;
  background: #9a9fa3;
}

.apps .current::after {
  width: 16px;
}

.speed {
  width: 110px;
  height: 36px;
  margin: 0 67px 2px 0;
  background: #000080;
  font-size: 15px;
  font-weight: 700;
  line-height: 18px;
}

.speed div {
  display: flex;
  padding-left: 2px;
}

.speed .down {
  margin-top: -2px;
}

.speed i {
  width: 11px;
  font-style: normal;
}

.down {
  color: #e0209c;
}

.down i {
  color: #f0204a;
}

.up {
  color: #0a6b3a;
}

.up i {
  color: #3ee070;
}

.tray {
  display: flex;
  align-items: center;
  gap: 8px;
}

.tray svg {
  width: 16px;
  height: 16px;
}

.tray .line {
  fill: none;
  stroke: #fff;
}

.tray .keyboard {
  height: 12px;
  margin: 0 8px 0 4px;
}

.counter {
  width: 16px;
  text-align: center;
  font-size: 8px;
}

.temp {
  width: 16px;
  height: 16px;
  background: #55534c;
  color: #e5bb3a;
  font-family: Roboto, sans-serif;
  font-size: 14px;
  text-align: center;
}

.clock {
  display: flex;
  flex-direction: column;
  align-items: flex-end;
  padding-left: 2px;
}
```
